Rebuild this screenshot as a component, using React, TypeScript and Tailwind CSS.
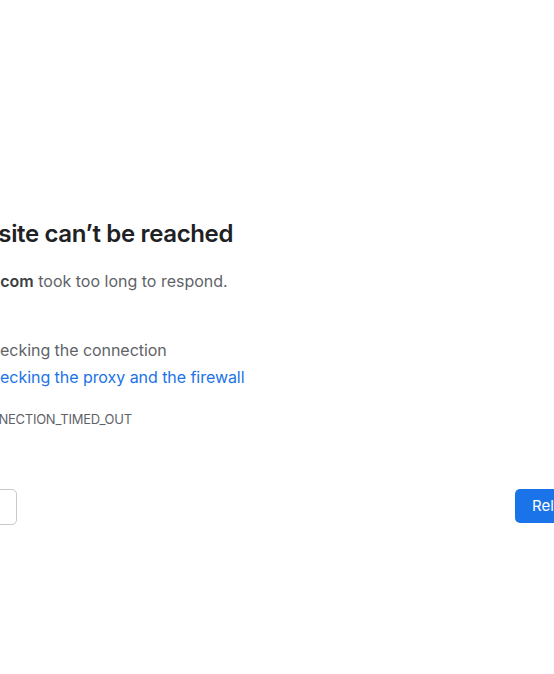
import React from "react";

export default function App() {
  return (
    <div
      className="w-[554px] h-[674px] overflow-hidden bg-white"
      style={{ fontFamily: "Inter, 'Noto Sans', sans-serif" }}
    >
      <div className="ml-[-52px] w-[700px] pt-[219px]">
        <h1 className="ml-[-4px] text-[24px] leading-[30px] font-semibold text-[#202124] whitespace-nowrap tracking-[-0.35px]">
          This site can’t be reached
        </h1>
        <p className="mt-[22px] ml-[-6px] text-[16px] leading-[20px] text-[#5f6368] whitespace-nowrap">
          <strong className="font-semibold text-[#3c4043]">google.com</strong> took too long to respond.
        </p>
        <p className="mt-[16px] text-[16px] leading-[20px] text-[#5f6368]">Try:</p>
        <ul className="mt-[13px] ml-[31px] text-[16px] leading-[20px] whitespace-nowrap tracking-[-0.05px]">
          <li className="text-[#5f6368]">Checking the connection</li>
          <li className="mt-[7px]">
            <a className="text-[#1a73e8]">Checking the proxy and the firewall</a>
          </li>
        </ul>
        <div className="mt-[24px] ml-[-7px] text-[13px] leading-[16px] text-[#5f6368] whitespace-nowrap tracking-[-0.25px]">
          ERR_CONNECTION_TIMED_OUT
        </div>
      </div>
      <div className="ml-[-63px] w-[660px] mt-[62px] flex justify-between items-start">
        <button className="w-[80px] h-[36px] rounded-[5px] border border-[#c8c9cc] bg-white text-[14px] text-[#1a73e8]">
          Details
        </button>
        <button className="w-[82px] h-[34px] rounded-[5px] bg-[#1a73e8] text-white text-[15px] text-left pl-[17px]">
          Reload
        </button>
      </div>
    </div>
  );
}
